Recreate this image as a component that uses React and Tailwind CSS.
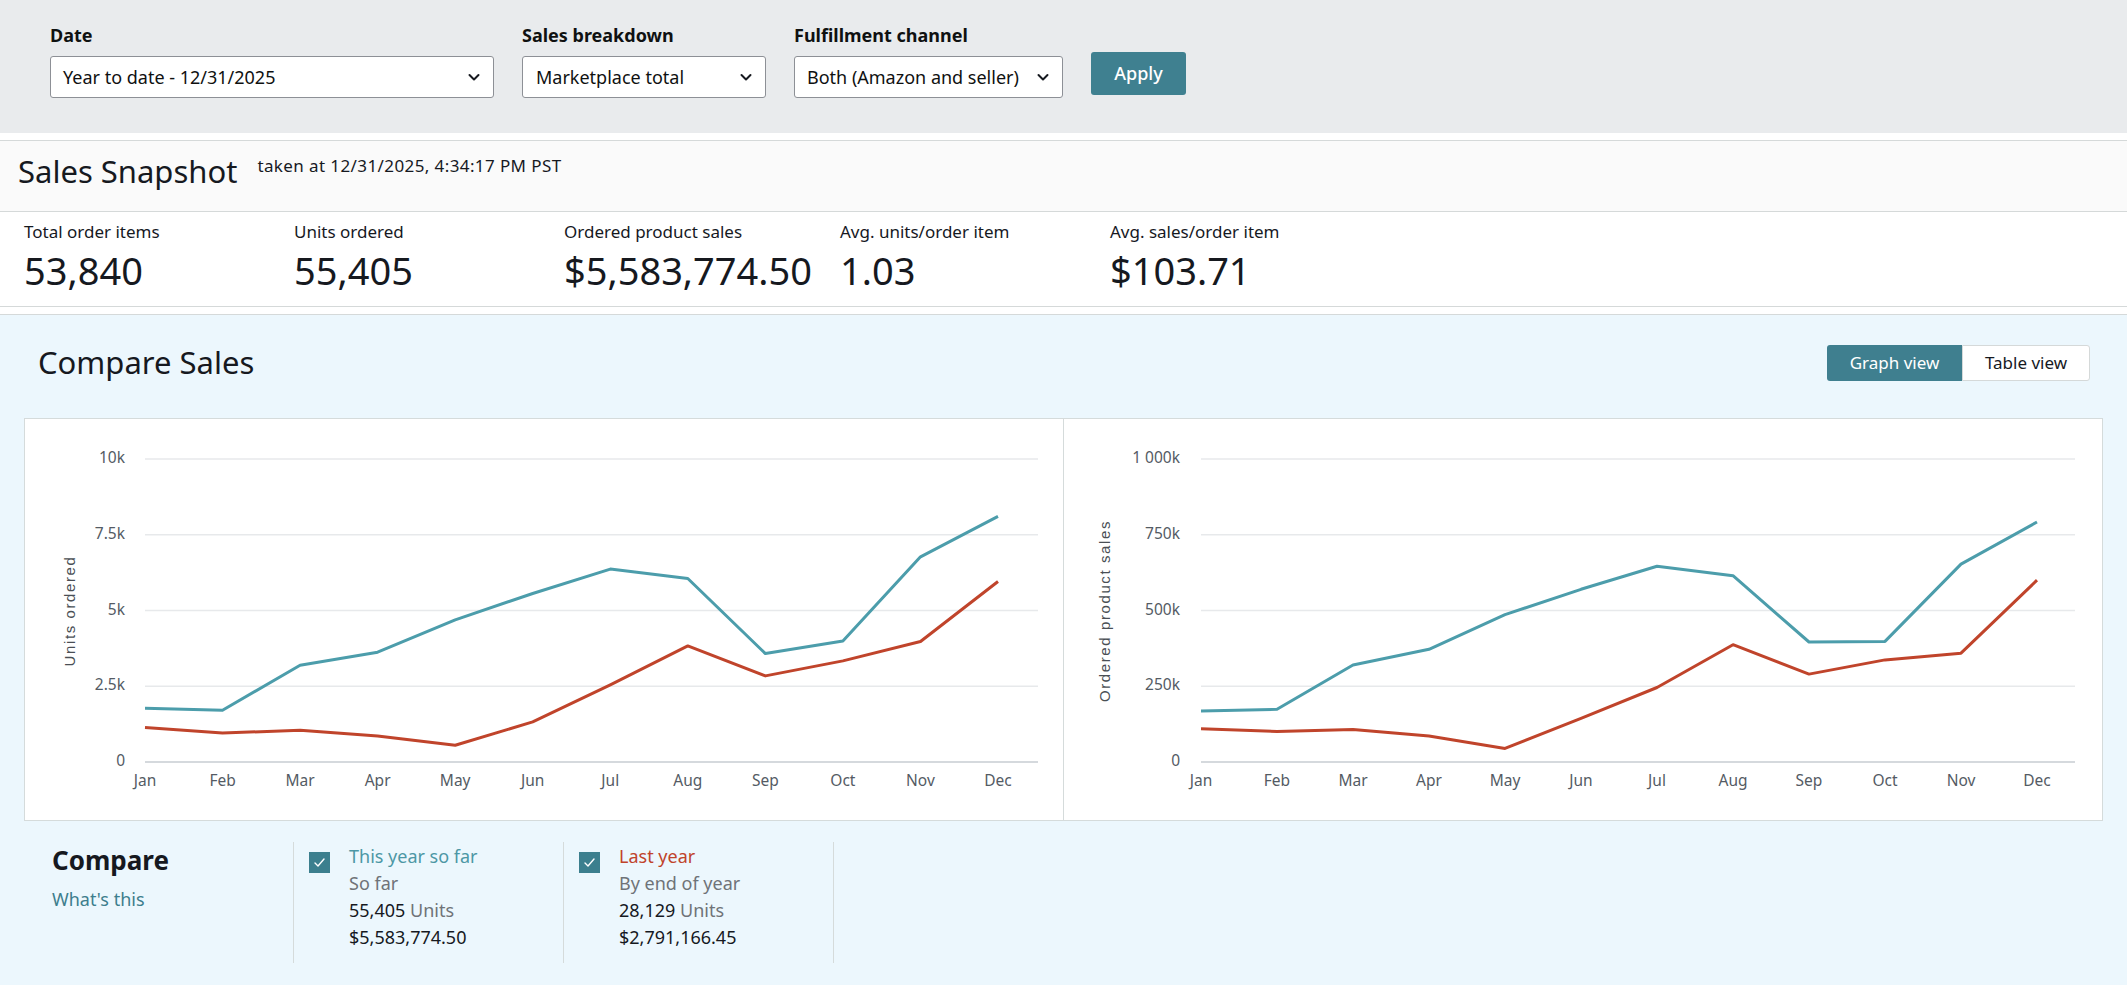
import React from 'react';

const months = ['Jan', 'Feb', 'Mar', 'Apr', 'May', 'Jun', 'Jul', 'Aug', 'Sep', 'Oct', 'Nov', 'Dec'];

const unitsThis = [1773, 1707, 3194, 3623, 4692, 5562, 6366, 6057, 3579, 3998, 6773, 8106];
const unitsLast = [1134, 958, 1046, 859, 551, 1322, 2544, 3833, 2841, 3337, 3976, 5958];
const salesThis = [168, 174, 320, 372, 486, 570, 646, 615, 396, 398, 653, 792];
const salesLast = [110, 101, 107, 86, 45, 144, 246, 387, 290, 337, 359, 600];

const Chevron = () => (
    <svg width="16" height="16" viewBox="0 0 16 16" fill="none">
        <path d="M3.5 6l4.5 4.5L12.5 6" stroke="#16191f" strokeWidth="2" strokeLinecap="round" strokeLinejoin="round" />
    </svg>
);

const SelectBox = ({ width, value, pl = 'pl-[12px]' }) => (
    <div className={`${width} ${pl} h-[42px] bg-white border border-[#8d9096] rounded-[3px] flex items-center justify-between pr-[11px] text-[18px] text-[#0f1111]`}>
        <span>{value}</span>
        <Chevron />
    </div>
);

const Chart = ({ title, ticks, max, teal, red, x0, gx0, gx1, labelX, titleX }) => {
    const top = 40;
    const base = 343;
    const step = (973 - x0) / 11;
    const xs = months.map((_, i) => x0 + i * step);
    const y = (v) => base - (v / max) * (base - top);
    const pts = (arr) => arr.map((v, i) => `${xs[i].toFixed(1)},${y(v).toFixed(1)}`).join(' ');

    return (
        <svg width="100%" height="401" className="block">
            {ticks.map((t, i) => {
                const gy = base - i * ((base - top) / 4);
                return (
                    <g key={t}>
                        <line x1={gx0} x2={gx1} y1={gy} y2={gy} stroke={i === 0 ? '#d5d9dd' : '#e7e9eb'} strokeWidth={i === 0 ? 2 : 1.5} />
                        <text x={labelX} y={gy} textAnchor="end" dominantBaseline="middle" fontSize="15.5" fill="#545b64" fontFamily="Noto Sans, sans-serif">{t}</text>
                    </g>
                );
            })}
            {months.map((m, i) => (
                <text key={m} x={xs[i]} y={363} textAnchor="middle" dominantBaseline="middle" fontSize="15.5" fill="#545b64" fontFamily="Noto Sans, sans-serif">{m}</text>
            ))}
            <text
                x={titleX}
                y={192}
                transform={`rotate(-90 ${titleX} 192)`}
                textAnchor="middle"
                dominantBaseline="middle"
                fontSize="15"
                letterSpacing="1.6"
                fill="#4a4f55"
                fontFamily="Liberation Sans, sans-serif"
            >
                {title}
            </text>
            <polyline points={pts(teal)} fill="none" stroke="#4c9dab" strokeWidth="3" strokeLinejoin="round" />
            <polyline points={pts(red)} fill="none" stroke="#c0442b" strokeWidth="3" strokeLinejoin="round" />
        </svg>
    );
};

const Check = () => (
    <div className="w-[21px] h-[21px] bg-[#3c7f8e] flex items-center justify-center mt-[10px] shrink-0">
        <svg width="13" height="13" viewBox="0 0 13 13" fill="none">
            <path d="M2 7l3 3 6-7" stroke="white" strokeWidth="1.4" strokeLinecap="round" strokeLinejoin="round" />
        </svg>
    </div>
);

const App = () => {
    return (
        <div className="min-h-screen bg-[#ecf7fd] font-['Noto_Sans',sans-serif] text-[#0f1111]">
            {/* Filter bar */}
            <div className="bg-[#e9ebed] h-[133px] pl-[50px] pt-[22px] flex items-start gap-[28px]">
                <div>
                    <div className="font-bold text-[18px] leading-[26px] mb-[8px]">Date</div>
                    <SelectBox width="w-[444px]" value="Year to date - 12/31/2025" />
                </div>
                <div>
                    <div className="font-bold text-[18px] leading-[26px] mb-[8px]">Sales breakdown</div>
                    <SelectBox width="w-[244px]" pl="pl-[13px]" value="Marketplace total" />
                </div>
                <div>
                    <div className="font-bold text-[18px] leading-[26px] mb-[8px]">Fulfillment channel</div>
                    <SelectBox width="w-[269px]" value="Both (Amazon and seller)" />
                </div>
                <button className="mt-[30px] h-[43px] w-[95px] bg-[#3f8090] rounded-[3px] text-white text-[18px] font-medium">Apply</button>
            </div>

            {/* Snapshot */}
            <div className="bg-white pt-[7px] pb-[7px] border-b border-[#d5d9d9]">
                <div className="h-[72px] border-y border-[#d5d9d9] bg-[#fafafa] flex items-start pl-[18px]">
                    <h1 className="text-[31px] leading-[36px] mt-[12px] text-[#16191f]">Sales Snapshot</h1>
                    <span className="text-[17px] leading-[24px] mt-[13px] ml-[20px] tracking-[0.4px] text-[#16191f]">taken at 12/31/2025, 4:34:17 PM PST</span>
                </div>
                <div className="h-[95px] border-b border-[#d5d9d9] flex pl-[24px] pt-[8px]">
                    {[
                        ['Total order items', '53,840', 'w-[270px]'],
                        ['Units ordered', '55,405', 'w-[270px]'],
                        ['Ordered product sales', '$5,583,774.50', 'w-[276px]'],
                        ['Avg. units/order item', '1.03', 'w-[270px]'],
                        ['Avg. sales/order item', '$103.71', 'w-[270px]'],
                    ].map(([label, value, w]) => (
                        <div key={label} className={w}>
                            <div className="text-[17px] leading-[24px] text-[#16191f]">{label}</div>
                            <div className="text-[38px] leading-[44px] mt-[4px] text-[#16191f]">{value}</div>
                        </div>
                    ))}
                </div>
            </div>

            {/* Compare Sales */}
            <div className="px-[24px] pb-[20px]">
                <div className="flex items-start justify-between pt-[29px] pl-[14px] pr-[13px]">
                    <h2 className="text-[31px] leading-[36px] text-[#16191f]">Compare Sales</h2>
                    <div className="flex h-[36px] mt-[1px] text-[17px]">
                        <div className="w-[135px] bg-[#3f7f8f] text-white rounded-l-[3px] flex items-center justify-center">Graph view</div>
                        <div className="w-[128px] bg-white border border-[#d5d9d9] rounded-r-[3px] flex items-center justify-center text-[#16191f]">Table view</div>
                    </div>
                </div>

                <div className="mt-[37px] h-[403px] bg-white border border-[#d5dbdb] flex">
                    <div className="w-[1039px] border-r border-[#d5dbdb]">
                        <Chart
                            title="Units ordered"
                            ticks={['0', '2.5k', '5k', '7.5k', '10k']}
                            max={10000}
                            teal={unitsThis}
                            red={unitsLast}
                            x0={120}
                            gx0={120}
                            gx1={1013}
                            labelX={100}
                            titleX={46}
                        />
                    </div>
                    <div className="flex-1">
                        <Chart
                            title="Ordered product sales"
                            ticks={['0', '250k', '500k', '750k', '1 000k']}
                            max={1000}
                            teal={salesThis}
                            red={salesLast}
                            x0={137}
                            gx0={137}
                            gx1={1011}
                            labelX={116}
                            titleX={42}
                        />
                    </div>
                </div>

                {/* Compare legend */}
                <div className="mt-[21px] flex h-[121px]">
                    <div className="w-[270px] border-r border-[#d5dbdb] pl-[28px] pt-[2px]">
                        <div className="text-[26px] leading-[32px] font-bold text-[#16191f]">Compare</div>
                        <div className="text-[18px] leading-[26px] mt-[10px] text-[#3d7e8d]">What's this</div>
                    </div>
                    <div className="w-[270px] border-r border-[#d5dbdb] pl-[15px] flex gap-[19px]">
                        <Check />
                        <div className="text-[18px] leading-[27px] pt-[1px]">
                            <div className="text-[#4c97a5]">This year so far</div>
                            <div className="text-[#6f7378]">So far</div>
                            <div className="text-[#16191f]">55,405 <span className="text-[#6f7378]">Units</span></div>
                            <div className="text-[#16191f]">$5,583,774.50</div>
                        </div>
                    </div>
                    <div className="w-[270px] border-r border-[#d5dbdb] pl-[15px] flex gap-[19px]">
                        <Check />
                        <div className="text-[18px] leading-[27px] pt-[1px]">
                            <div className="text-[#c0432a]">Last year</div>
                            <div className="text-[#6f7378]">By end of year</div>
                            <div className="text-[#16191f]">28,129 <span className="text-[#6f7378]">Units</span></div>
                            <div className="text-[#16191f]">$2,791,166.45</div>
                        </div>
                    </div>
                </div>
            </div>
        </div>
    );
};

export default App;
